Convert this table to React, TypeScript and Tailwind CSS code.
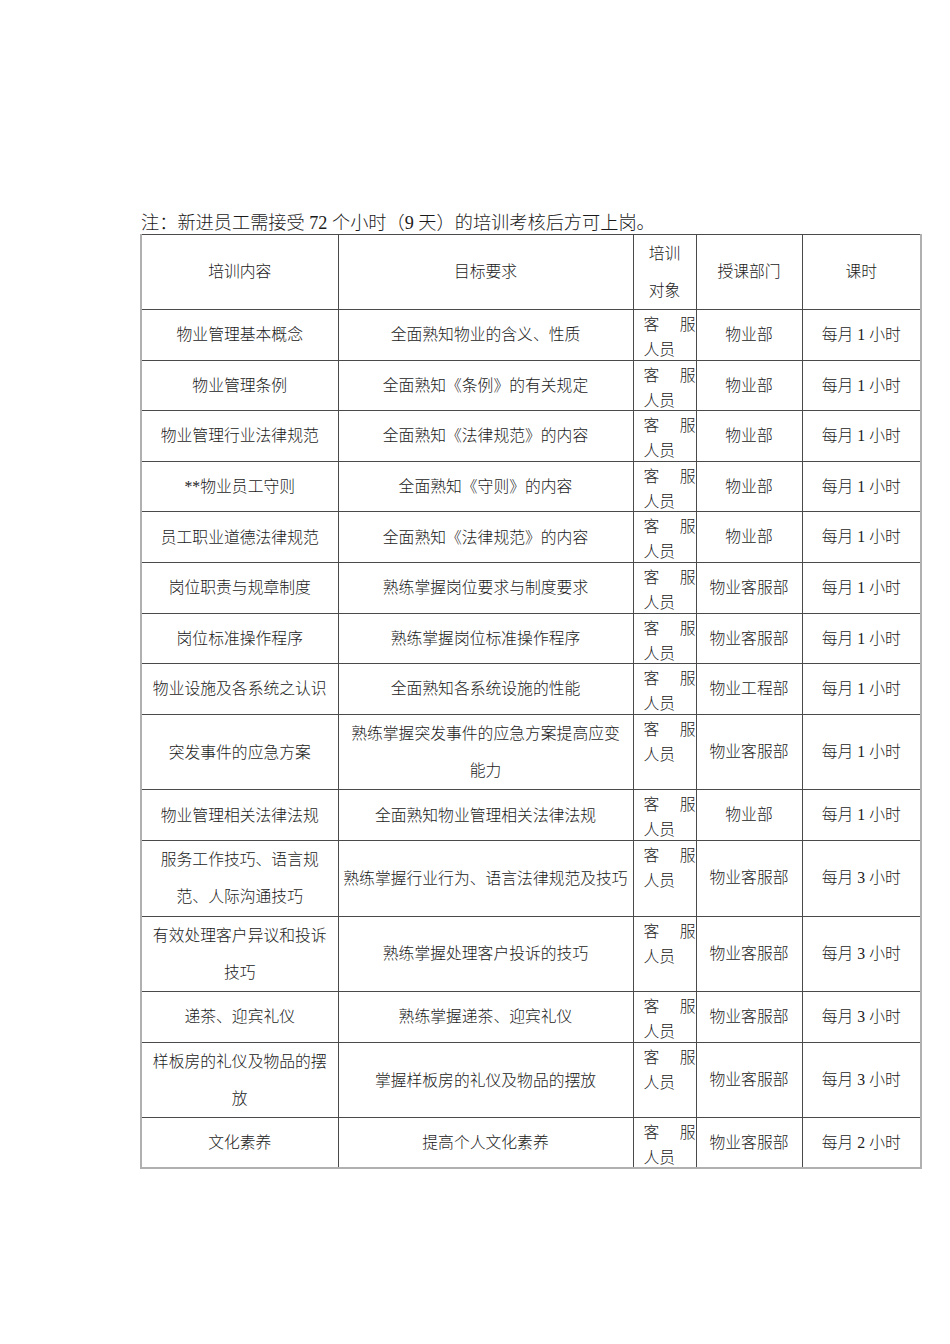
import React from 'react';

type Row = {
  content: string[];
  goal: string[];
  dept: string;
  hours: string;
  tall?: boolean;
};

// 培训计划表数据
const rows: Row[] = [
  { content: ['物业管理基本概念'], goal: ['全面熟知物业的含义、性质'], dept: '物业部', hours: '1' },
  { content: ['物业管理条例'], goal: ['全面熟知《条例》的有关规定'], dept: '物业部', hours: '1' },
  { content: ['物业管理行业法律规范'], goal: ['全面熟知《法律规范》的内容'], dept: '物业部', hours: '1' },
  { content: ['**物业员工守则'], goal: ['全面熟知《守则》的内容'], dept: '物业部', hours: '1' },
  { content: ['员工职业道德法律规范'], goal: ['全面熟知《法律规范》的内容'], dept: '物业部', hours: '1' },
  { content: ['岗位职责与规章制度'], goal: ['熟练掌握岗位要求与制度要求'], dept: '物业客服部', hours: '1' },
  { content: ['岗位标准操作程序'], goal: ['熟练掌握岗位标准操作程序'], dept: '物业客服部', hours: '1' },
  { content: ['物业设施及各系统之认识'], goal: ['全面熟知各系统设施的性能'], dept: '物业工程部', hours: '1' },
  { content: ['突发事件的应急方案'], goal: ['熟练掌握突发事件的应急方案提高应变', '能力'], dept: '物业客服部', hours: '1', tall: true },
  { content: ['物业管理相关法律法规'], goal: ['全面熟知物业管理相关法律法规'], dept: '物业部', hours: '1' },
  { content: ['服务工作技巧、语言规', '范、人际沟通技巧'], goal: ['熟练掌握行业行为、语言法律规范及技巧'], dept: '物业客服部', hours: '3', tall: true },
  { content: ['有效处理客户异议和投诉', '技巧'], goal: ['熟练掌握处理客户投诉的技巧'], dept: '物业客服部', hours: '3', tall: true },
  { content: ['递茶、迎宾礼仪'], goal: ['熟练掌握递茶、迎宾礼仪'], dept: '物业客服部', hours: '3' },
  { content: ['样板房的礼仪及物品的摆', '放'], goal: ['掌握样板房的礼仪及物品的摆放'], dept: '物业客服部', hours: '3', tall: true },
  { content: ['文化素养'], goal: ['提高个人文化素养'], dept: '物业客服部', hours: '2' },
];

const Lines = ({ lines }: { lines: string[] }) => (
  <>
    {lines.map((l, i) => (
      <div key={i} className="whitespace-nowrap leading-[37px]">
        {l}
      </div>
    ))}
  </>
);

// 培训对象: "客 服 / 人员", top-left, overflows the row a little like the original
const Target = () => (
  <div className="h-[46px] pl-[10px] pt-[2px] leading-[25px]">
    <div className="flex justify-between">
      <span>客</span>
      <span>服</span>
    </div>
    <div className="whitespace-nowrap">人员</div>
  </div>
);

const App: React.FC = () => {
  const cell = 'border border-[#4a4a4a] text-center align-middle p-0';

  return (
    <div className="min-h-[1344px] w-[950px] bg-white text-[#1a1a1a] font-['Liberation_Serif','Noto_Sans_CJK_SC',serif] font-light">
      <div className="pl-[140px] pt-[213px]">
        {/* Note */}
        <div className="pl-[1px] text-[18.2px] leading-[21px] whitespace-nowrap">
          注：新进员工需接受 72 个小时（9 天）的培训考核后方可上岗。
        </div>

        <table className="table-fixed border-collapse w-[780px] text-[15.8px] border-l-2 border-r-2 border-b-2 border-[#b0b0b0]">
          <colgroup>
            <col className="w-[197px]" />
            <col className="w-[295px]" />
            <col className="w-[63px]" />
            <col className="w-[106px]" />
            <col className="w-[119px]" />
          </colgroup>
          <thead>
            <tr className="h-[75px]">
              <th className={`${cell} font-light`}>培训内容</th>
              <th className={`${cell} font-light`}>目标要求</th>
              <th className={`${cell} font-light`}>
                <Lines lines={['培训', '对象']} />
              </th>
              <th className={`${cell} font-light`}>授课部门</th>
              <th className={`${cell} font-light`}>课时</th>
            </tr>
          </thead>
          <tbody>
            {rows.map((r, i) => (
              <tr key={i} className={r.tall ? 'h-[75.6px]' : 'h-[50.6px]'}>
                <td className={cell}>
                  <Lines lines={r.content} />
                </td>
                <td className={cell}>
                  <Lines lines={r.goal} />
                </td>
                <td className={`${cell} !align-top !text-left`}>
                  <Target />
                </td>
                <td className={cell}>{r.dept}</td>
                <td className={`${cell} whitespace-nowrap`}>每月 {r.hours} 小时</td>
              </tr>
            ))}
          </tbody>
        </table>
      </div>
    </div>
  );
};

export default App;
